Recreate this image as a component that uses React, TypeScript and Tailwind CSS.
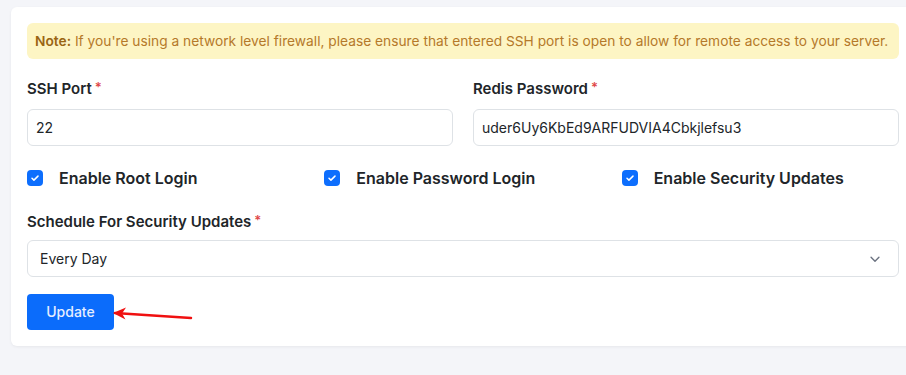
import React from "react";

const font = { fontFamily: "Inter, 'Open Sans', sans-serif" };

const Check = () => (
  <span className="flex h-4 w-4 shrink-0 items-center justify-center rounded-[4px] bg-[#0d6efd]">
    <svg viewBox="0 0 16 16" className="h-3 w-3" fill="none">
      <path d="M4 8.3l2.6 2.5L12 5.5" stroke="#fff" strokeWidth="2" strokeLinecap="round" strokeLinejoin="round" />
    </svg>
  </span>
);

const Label = ({ children }: { children: React.ReactNode }) => (
  <label className="mb-2.5 flex items-start text-[15px] font-semibold leading-5 text-[#212529]">
    {children}
    <span className="ml-[3px] text-[13px] leading-4 text-[#e04848]">*</span>
  </label>
);

const CheckItem = ({ label }: { label: string }) => (
  <div className="flex items-center gap-4">
    <Check />
    <span className="text-base font-semibold text-[#212529]">{label}</span>
  </div>
);

export default function App() {
  return (
    <div className="min-h-screen overflow-hidden bg-[#f4f5f9] pl-[11px] pt-[7px]" style={font}>
      <div className="w-[904px] rounded-md bg-white p-4 shadow-[0_1px_3px_rgba(0,0,0,0.06)]">
        {/* Note */}
        <div className="flex h-9 items-center rounded-md bg-[#fdf5c4] px-2 text-[13.75px] text-[#b5792a]">
          <p>
            <span className="font-semibold text-[#9a6513]">Note:</span> If you're using a network level
            firewall, please ensure that entered SSH port is open to allow for remote access to your server.
          </p>
        </div>

        {/* Port + password */}
        <div className="mt-5 grid grid-cols-2 gap-5">
          <div>
            <Label>SSH Port</Label>
            <input
              defaultValue="22"
              className="h-[37px] w-full rounded-md border border-[#dee2e6] px-2 text-sm text-[#212529] outline-none"
            />
          </div>
          <div>
            <Label>Redis Password</Label>
            <input
              defaultValue="uder6Uy6KbEd9ARFUDVIA4Cbkjlefsu3"
              className="h-[37px] w-full rounded-md border border-[#dee2e6] px-2 text-sm text-[#212529] outline-none"
            />
          </div>
        </div>

        {/* Toggles */}
        <div className="mt-5 grid h-[22px] grid-cols-3 gap-5">
          <CheckItem label="Enable Root Login" />
          <CheckItem label="Enable Password Login" />
          <CheckItem label="Enable Security Updates" />
        </div>

        {/* Schedule */}
        <div className="mt-[24px]">
          <Label>Schedule For Security Updates</Label>
          <div className="-mt-[2px] flex h-[37px] items-center justify-between rounded-md border border-[#dee2e6] pl-3 pr-4 text-sm text-[#212529]">
            <span>Every Day</span>
            <svg viewBox="0 0 16 16" className="h-3.5 w-3.5" fill="none">
              <path d="M3.5 6l4.5 4.5L12.5 6" stroke="#6b7280" strokeWidth="1.6" strokeLinecap="round" strokeLinejoin="round" />
            </svg>
          </div>
        </div>

        {/* Submit */}
        <div className="relative mt-[17px] w-fit">
          <button className="h-9 w-[87px] rounded-[4px] bg-[#0b6cfb] text-sm font-medium text-[#e6eeff]">
            Update
          </button>
          <svg className="absolute left-[84px] top-[10px] h-[20px] w-[84px]" viewBox="0 0 84 20" fill="none">
            <path d="M80 14L4 9" stroke="#f01010" strokeWidth="2.5" strokeLinecap="round" />
            <path d="M2 9L15 3.5L11 9.5L14.5 15.5Z" fill="#f01010" />
          </svg>
        </div>
      </div>
    </div>
  );
}
